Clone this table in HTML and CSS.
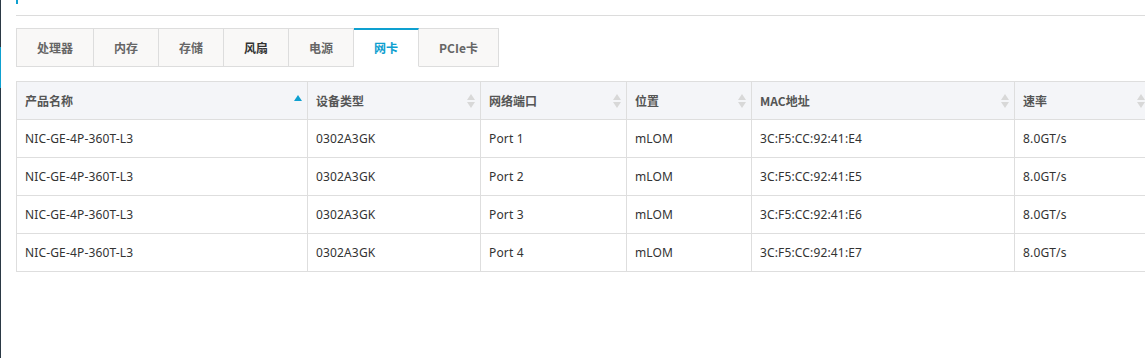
FILE: index.html
```html
<!DOCTYPE html>
<html lang="zh">
<head>
<meta charset="utf-8">
<link rel="stylesheet" href="styles.css">
</head>
<body>
<div class="page">
  <aside class="rail"><span class="rail-active"></span></aside>
  <main class="content">
    <div class="title-bar"><span class="title-mark"></span></div>
    <nav class="tabs">
      <span class="tab">处理器</span>
      <span class="tab">内存</span>
      <span class="tab">存储</span>
      <span class="tab tab-hover">风扇</span>
      <span class="tab">电源</span>
      <span class="tab tab-active">网卡</span>
      <span class="tab">PCIe卡</span>
    </nav>
    <div class="table-wrap">
      <table class="grid">
        <colgroup>
          <col class="c1"><col class="c2"><col class="c3"><col class="c4"><col class="c5"><col class="c6">
        </colgroup>
        <thead>
          <tr>
            <th><div class="th-in"><span>产品名称</span><span class="sort sort-asc"><i class="up"></i></span></div></th>
            <th><div class="th-in"><span>设备类型</span><span class="sort"><i class="up"></i><i class="down"></i></span></div></th>
            <th><div class="th-in"><span>网络端口</span><span class="sort"><i class="up"></i><i class="down"></i></span></div></th>
            <th><div class="th-in"><span>位置</span><span class="sort"><i class="up"></i><i class="down"></i></span></div></th>
            <th><div class="th-in"><span>MAC地址</span><span class="sort"><i class="up"></i><i class="down"></i></span></div></th>
            <th><div class="th-in"><span>速率</span><span class="sort"><i class="up"></i><i class="down"></i></span></div></th>
          </tr>
        </thead>
        <tbody>
          <tr><td>NIC-GE-4P-360T-L3</td><td>0302A3GK</td><td>Port 1</td><td>mLOM</td><td>3C:F5:CC:92:41:E4</td><td>8.0GT/s</td></tr>
          <tr><td>NIC-GE-4P-360T-L3</td><td>0302A3GK</td><td>Port 2</td><td>mLOM</td><td>3C:F5:CC:92:41:E5</td><td>8.0GT/s</td></tr>
          <tr><td>NIC-GE-4P-360T-L3</td><td>0302A3GK</td><td>Port 3</td><td>mLOM</td><td>3C:F5:CC:92:41:E6</td><td>8.0GT/s</td></tr>
          <tr><td>NIC-GE-4P-360T-L3</td><td>0302A3GK</td><td>Port 4</td><td>mLOM</td><td>3C:F5:CC:92:41:E7</td><td>8.0GT/s</td></tr>
        </tbody>
      </table>
    </div>
  </main>
</div>
</body>
</html>
```
FILE: styles.css
```css
html, body {
  margin: 0;
  padding: 0;
  background: #fff;
  height: 100%;
  overflow: hidden;
}
body {
  font-family: "Noto Sans", "Noto Sans CJK SC", sans-serif;
  font-size: 12px;
  color: #333;
}
.page {
  display: flex;
  height: 358px;
}
.rail {
  width: 1px;
  flex: 0 0 1px;
  background: #2b3945;
  display: flex;
  flex-direction: column;
}
.rail-active {
  margin-top: 47px;
  height: 41px;
  background: #0ea0d0;
}
.content {
  flex: 1;
  min-width: 0;
  padding-left: 15px;
  overflow: hidden;
}
.title-bar {
  height: 15px;
  border-bottom: 1px solid #dcdcdc;
}
.title-mark {
  display: block;
  width: 2px;
  height: 4px;
  background: #0ea0d0;
}
.tabs {
  display: flex;
  margin-top: 12px;
  height: 39px;
}
.tab {
  display: flex;
  align-items: center;
  padding: 0 20px;
  background: #f9f8f7;
  border: 1px solid #dddddd;
  border-left: none;
  color: #666;
  font-weight: bold;
  font-family: "Noto Sans CJK SC", sans-serif;
  font-size: 12px;
}
.tab:first-child {
  border-left: 1px solid #dddddd;
}
.tab-hover {
  color: #333;
}
.tab-active {
  background: #fff;
  color: #0ea0d0;
  border-top: 2px solid #0ea0d0;
  border-bottom-color: #fff;
  padding-bottom: 1px;
}
.table-wrap {
  margin-top: 14px;
  width: 1134px;
}
.grid {
  border-collapse: collapse;
  table-layout: fixed;
  width: 1134px;
}
.c1 { width: 291px; }
.c2 { width: 173px; }
.c3 { width: 146px; }
.c4 { width: 125px; }
.c5 { width: 263px; }
.c6 { width: 136px; }
.grid th, .grid td {
  border: 1px solid #dedede;
  height: 38px;
  padding: 0 8px;
  text-align: left;
  box-sizing: border-box;
}
.grid th {
  background: #f4f5f8;
  color: #555;
  font-weight: bold;
  font-family: "Noto Sans CJK SC", sans-serif;
}
.grid td {
  color: #333;
  letter-spacing: 0.15px;
}
.th-in {
  display: flex;
  align-items: center;
  justify-content: space-between;
}
.sort {
  display: flex;
  flex-direction: column;
  gap: 2px;
  margin-right: -3px;
}
.sort i {
  display: block;
  width: 0;
  height: 0;
  border-left: 4px solid transparent;
  border-right: 4px solid transparent;
}
.sort .up {
  border-bottom: 6px solid #d8d8d8;
}
.sort .down {
  border-top: 6px solid #d8d8d8;
}
.sort-asc {
  margin-bottom: 6px;
}
.sort-asc .up {
  border-bottom-color: #0ea0d0;
}
```
